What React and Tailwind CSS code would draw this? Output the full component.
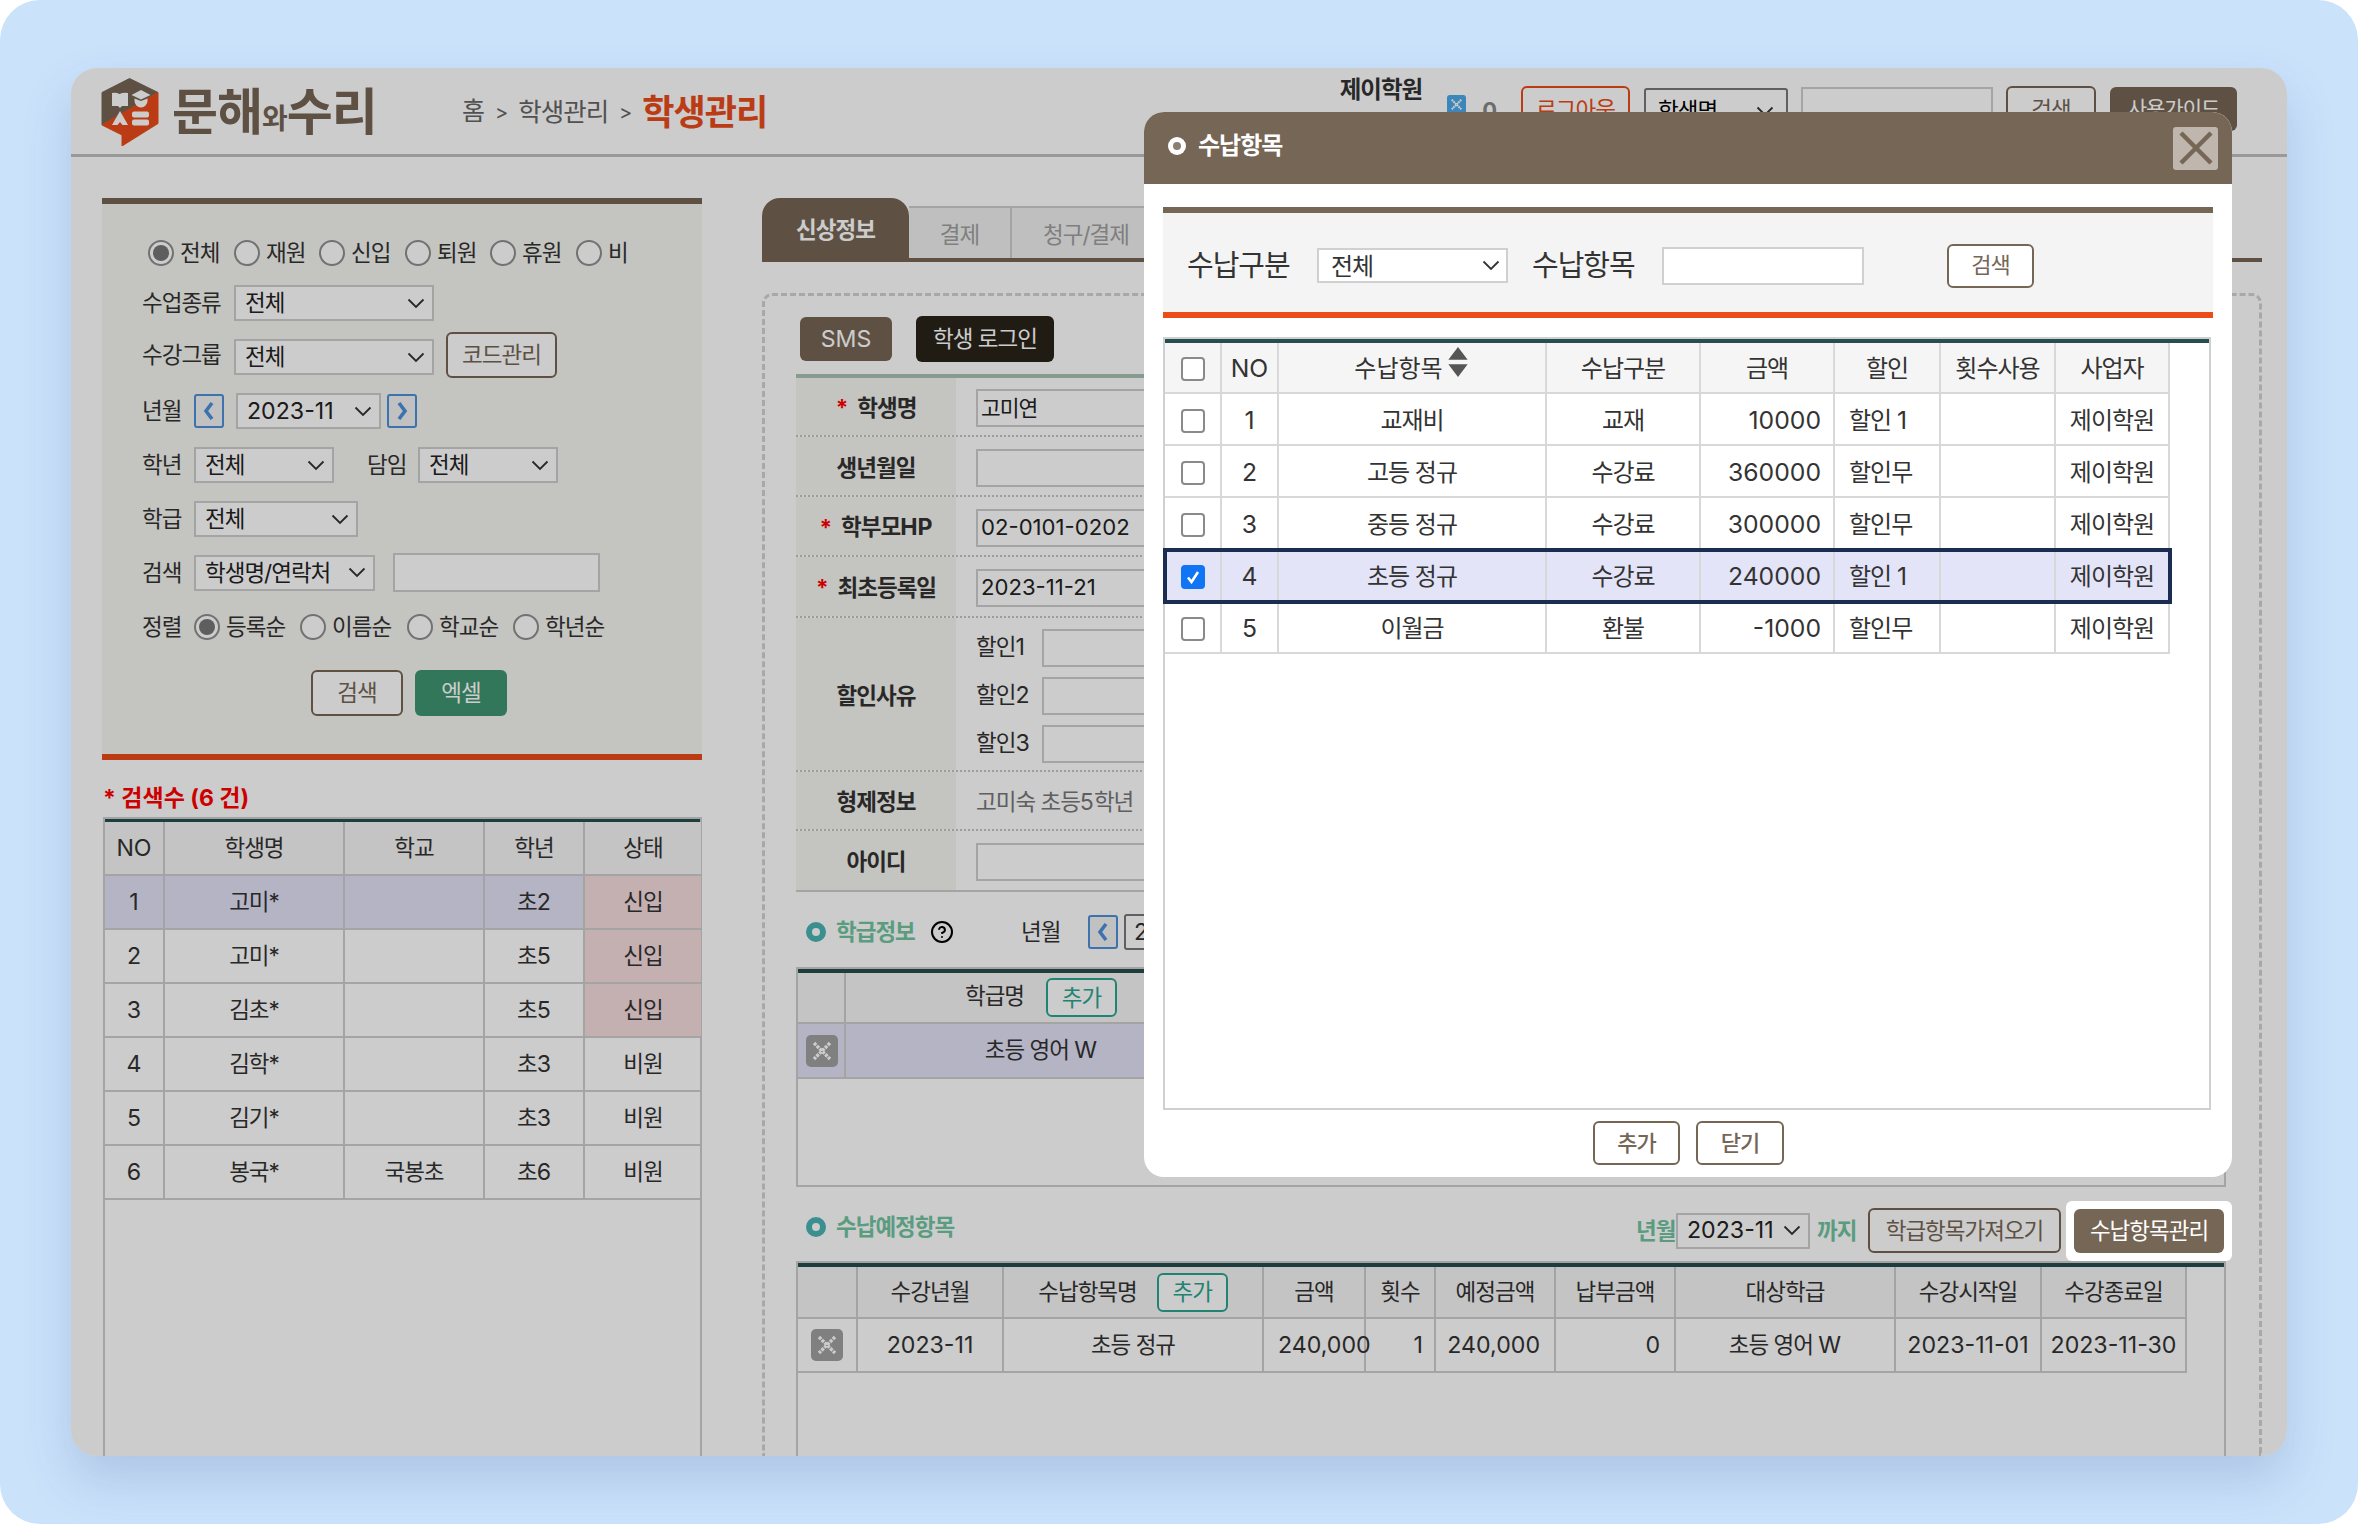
import React from "react";
import { CircleHelp } from "lucide-react";

const BR = "border-[#cecece]";
const Tx = ({ children }) => {
  const parts = String(children).split(/([0-9A-Za-z,\-]+)/);
  return (
    <>
      {parts.map((p, i) =>
        /^[0-9A-Za-z,\-]+$/.test(p) ? (
          <span key={i} className="text-[1.03em] tracking-normal">{p}</span>
        ) : (
          <span key={i}>{p}</span>
        )
      )}
    </>
  );
};

const Chev = ({ className = "" }) => (
  <svg width="18" height="11" viewBox="0 0 18 11" className={className}>
    <polyline points="1.5,1.5 9,9 16.5,1.5" fill="none" stroke="#333" strokeWidth="1.8" />
  </svg>
);

const Sel = ({ w, t, className = "" }) => (
  <div className={`flex h-[36px] shrink-0 items-center justify-between border-2 ${BR} bg-white pl-[9px] pr-[7px] text-[#222] ${className}`} style={{ width: w }}>
    <span className="whitespace-nowrap"><Tx>{t}</Tx></span>
    <Chev />
  </div>
);

const Label = ({ w, children, className = "" }) => (
  <span className={`block shrink-0 whitespace-nowrap ${className}`} style={{ width: w }}><Tx>{children}</Tx></span>
);

const Radio = ({ on }) => (
  <span className="flex h-[26px] w-[26px] shrink-0 items-center justify-center rounded-full border-2 border-[#8f8f8f] bg-white">
    {on && <span className="h-[16px] w-[16px] rounded-full bg-[#767676]" />}
  </span>
);

const RadioItem = ({ w, on, t }) => (
  <span className="flex shrink-0 items-center gap-[6px]" style={{ width: w }}>
    <Radio on={on} />
    <span className="whitespace-nowrap">{t}</span>
  </span>
);

const NavBtn = ({ dir }) => (
  <span className="flex h-[34px] w-[30px] shrink-0 items-center justify-center rounded-[3px] border-2 border-[#4c8fd9] bg-[#f2f2f2]">
    <svg width="14" height="20" viewBox="0 0 14 20">
      <polyline points={dir === "l" ? "10,2 4,10 10,18" : "4,2 10,10 4,18"} fill="none" stroke="#4c8fd9" strokeWidth="3.6" />
    </svg>
  </span>
);

const Btn = ({ w, h = 46, t, className = "" }) => (
  <span className={`flex shrink-0 items-center justify-center whitespace-nowrap rounded-[6px] border-2 border-[#766656] bg-white text-[#766656] ${className}`} style={{ width: w, height: h }}>
    {t}
  </span>
);

const AddBtn = () => (
  <span className="inline-flex h-[39px] w-[71px] items-center justify-center rounded-[6px] border-2 border-[#2aa58f] bg-white text-[#2aa58f]">추가</span>
);

const XIcon = ({ color = "#a0a0a0", size = 32 }) => (
  <svg width={size} height={size} viewBox="0 0 32 32" className="block">
    <rect width="32" height="32" rx="5" fill={color} />
    <path d="M8 8 L24 24 M24 8 L8 24" stroke="#fff" strokeWidth="3.4" strokeDasharray="3 1" />
  </svg>
);

const Dot = () => <span className="h-[20px] w-[20px] shrink-0 rounded-full border-[6px] border-[#4cb3b3] bg-white" />;

const SecTitle = ({ children }) => (
  <span className="ml-[10px] flex items-center gap-[10px] font-bold text-[#71c4a0]">
    <Dot />
    <span className="whitespace-nowrap">{children}</span>
  </span>
);

const Check = ({ on }) =>
  on ? (
    <span className="flex h-[24px] w-[24px] items-center justify-center rounded-[4px] bg-[#0f75f5]">
      <svg width="16" height="16" viewBox="0 0 16 16">
        <path d="M3 8.5 L6.5 13 L13 3" fill="none" stroke="#fff" strokeWidth="2.6" />
      </svg>
    </span>
  ) : (
    <span className="block h-[24px] w-[24px] rounded-[4px] border-2 border-[#8a8a8a] bg-white" />
  );

const Logo = () => (
  <svg width="58" height="68" viewBox="0 0 58 68" className="shrink-0">
    <polygon points="28.5,0.5 57,14.5 1,47 1,14.5" fill="#766656" stroke="#766656" strokeLinejoin="round" />
    <polygon points="1,47 57,14.5 57,45.5 21,68 21,57" fill="#ea4c1a" stroke="#ea4c1a" strokeLinejoin="round" />
    <path d="M11 15 Q15 14 18.5 16 Q23 14 27 15 V28 H21 L19 30 L17 28 H11 Z" fill="#fff" />
    <polygon points="30.5,17 40,12 49.5,17 40,21.5" fill="#fff" />
    <path d="M33.5 20.5 L40 23 L46.5 20.5 V23 A6.5 6.5 0 0 1 33.5 23 Z" fill="#fff" />
    <polygon points="19,33 27,47 21.5,47 19,44 16.5,47 11,47" fill="#fff" />
    <rect x="31" y="33.5" width="17" height="6" rx="2" fill="#fff" />
    <rect x="31" y="41.5" width="17" height="6" rx="2" fill="#fff" />
  </svg>
);

const Header = () => (
  <div className="flex h-[89px] shrink-0 items-start border-b-[3px] border-[#c0c0c0] pl-[30px] pt-[10px]">
    <Logo />
    <div className="ml-[13px] flex h-[68px] w-[204px] items-center whitespace-nowrap font-bold leading-none tracking-[-1px] text-[#766656]">
      <span className="text-[50px]">문해</span>
      <span className="mt-[14px] text-[28px]">와</span>
      <span className="text-[50px]">수리</span>
    </div>
    <div className="ml-[86px] flex h-[68px] items-center whitespace-nowrap text-[#666]">
      <span className="text-[25px]">홈</span>
      <span className="mx-[11px] text-[20px]">&gt;</span>
      <span className="text-[25.5px]">학생관리</span>
      <span className="mx-[11px] text-[20px]">&gt;</span>
      <span className="text-[35px] font-bold tracking-[-1px] text-[#ea4c1a]">학생관리</span>
    </div>
    <div className="ml-auto mr-[50px] mt-[8px] flex items-start">
      <span className="mt-[-14px] text-[23.5px] font-bold text-[#333]">제이학원</span>
      <span className="ml-[25px] mt-[9px]"><XIcon color="#4da8e8" size={19} /></span>
      <span className="ml-[16px] mt-[8px] text-[22px] font-bold text-[#888]">0</span>
      <Btn w={109} h={48} t="로그아웃" className="ml-[25px] border-[#ea4c1a] text-[#ea4c1a]" />
      <div className="ml-[14px] mt-[2px] flex h-[46px] w-[144px] items-center justify-between rounded-[3px] border-2 border-[#777] bg-white px-[12px]"><span>학생명</span><Chev /></div>
      <div className="ml-[13px] mt-[1px] h-[42px] w-[192px] border-2 border-[#cecece] bg-white" />
      <Btn w={90} h={48} t="검색" className="ml-[13px]" />
      <span className="ml-[14px] mt-[1px] flex h-[44px] w-[127px] items-center justify-center rounded-[6px] bg-[#766656] text-[21px] text-white">사용가이드</span>
    </div>
  </div>
);

const Sidebar = () => (
  <div className="ml-[31px] flex w-[600px] shrink-0 flex-col">
    <div className="flex h-[562px] shrink-0 flex-col border-y-[6px] border-b-[#ea4c1a] border-t-[#766656] bg-[#f6f5f0] pl-[40px] pt-[36px] text-[#333]">
      <div className="ml-[6px] flex h-[26px] items-center">
        <RadioItem w={86} on t="전체" />
        <RadioItem w={85} t="재원" />
        <RadioItem w={86} t="신입" />
        <RadioItem w={85} t="퇴원" />
        <RadioItem w={86} t="휴원" />
        <RadioItem w={50} t="비" />
      </div>
      <div className="mt-[19px] flex items-center">
        <Label w={92}>수업종류</Label>
        <Sel w={200} t="전체" />
      </div>
      <div className="mt-[11px] flex h-[46px] items-center">
        <Label w={92}>수강그룹</Label>
        <Sel w={200} t="전체" className="mt-[4px]" />
        <Btn w={111} t="코드관리" className="ml-[12px]" />
      </div>
      <div className="mt-[15px] flex h-[36px] items-center">
        <Label w={52}>년월</Label>
        <NavBtn dir="l" />
        <Sel w={145} t="2023-11" className="ml-[12px]" />
        <span className="ml-[6px]"><NavBtn dir="r" /></span>
      </div>
      <div className="mt-[18px] flex items-center">
        <Label w={52}>학년</Label>
        <Sel w={140} t="전체" />
        <Label w={51} className="ml-[33px]">담임</Label>
        <Sel w={140} t="전체" />
      </div>
      <div className="mt-[18px] flex items-center">
        <Label w={52}>학급</Label>
        <Sel w={164} t="전체" />
      </div>
      <div className="mt-[16px] flex h-[39px] items-center">
        <Label w={52}>검색</Label>
        <Sel w={181} t="학생명/연락처" />
        <div className={`ml-[18px] h-[39px] w-[207px] border-2 ${BR} bg-white`} />
      </div>
      <div className="mt-[22px] flex h-[26px] items-center">
        <Label w={52}>정렬</Label>
        <RadioItem w={106} on t="등록순" />
        <RadioItem w={107} t="이름순" />
        <RadioItem w={106} t="학교순" />
        <RadioItem w={100} t="학년순" />
      </div>
      <div className="ml-[169px] mt-[30px] flex gap-[12px]">
        <Btn w={92} t="검색" />
        <span className="flex h-[46px] w-[92px] items-center justify-center rounded-[6px] bg-[#3f9570] text-white">엑셀</span>
      </div>
    </div>
    <div className="ml-[1px] mt-[25px] whitespace-nowrap text-[23px] font-bold leading-[26px] tracking-normal text-[#ff0000]">* 검색수 (6 건)</div>
    <div className={`ml-[1px] mt-[6px] min-h-0 flex-1 border-x-2 border-t-2 ${BR}`}>
      <div className="h-[3px] bg-[#264e4e]" />
      <table className="w-full table-fixed border-separate border-spacing-0 text-center text-[#333]">
        <colgroup>
          {[60, 180, 140, 100, 116].map((w, i) => <col key={i} style={{ width: w }} />)}
        </colgroup>
        <thead>
          <tr className="h-[54px] bg-[#f5f5f5]">
            {["NO", "학생명", "학교", "학년", "상태"].map((h, i) => (
              <th key={i} className={`border-b-2 ${BR} p-0 font-normal ${i < 4 ? `border-r-2` : ""}`}><Tx>{h}</Tx></th>
            ))}
          </tr>
        </thead>
        <tbody>
          {[
            ["1", "고미*", "", "초2", "신입"],
            ["2", "고미*", "", "초5", "신입"],
            ["3", "김초*", "", "초5", "신입"],
            ["4", "김학*", "", "초3", "비원"],
            ["5", "김기*", "", "초3", "비원"],
            ["6", "봉국*", "국봉초", "초6", "비원"],
          ].map((r, ri) => (
            <tr key={ri} className={`h-[54px] ${ri === 0 ? "bg-[#e2e1f7]" : ""}`}>
              {r.map((c, i) => (
                <td key={i} className={`border-b-2 ${BR} p-0 ${i < 4 ? "border-r-2" : ""} ${i === 4 && ri < 3 ? "bg-[#f5dbde]" : ""}`}><Tx>{c}</Tx></td>
              ))}
            </tr>
          ))}
        </tbody>
      </table>
    </div>
  </div>
);

const FormRow = ({ h, label, star, children, last }) => (
  <div className={`flex ${last ? "border-b-2 border-solid border-[#cecece]" : "border-b-2 border-dotted border-[#c4c4c4]"}`} style={{ height: h }}>
    <div className="flex w-[160px] shrink-0 items-center justify-center gap-[10px] bg-[#f6f5f0] pt-[3px] font-bold text-[#333]">
      {star && <span className="text-[#ff0000]">*</span>}
      <span className="whitespace-nowrap"><Tx>{label}</Tx></span>
    </div>
    <div className="flex min-w-0 flex-1 items-center pl-[20px] pt-[3px]">{children}</div>
  </div>
);

const Inp = ({ v, w = 400, className = "" }) => (
  <div className={`flex h-[38px] shrink-0 items-center border-2 ${BR} bg-white pl-[3px] text-[21.5px] text-[#222] ${className}`} style={{ width: w }}><Tx>{v}</Tx></div>
);

const Main = () => (
  <div className="ml-[60px] flex w-[1500px] shrink-0 flex-col">
    <div className="flex h-[64px] shrink-0 items-end border-b-4 border-[#766656] text-[#9f9f9f]">
      <span className="flex h-[60px] w-[147px] items-center justify-center self-start rounded-t-[18px] bg-[#766656] pt-[4px] font-bold text-white">신상정보</span>
      <span className={`flex h-[52px] w-[103px] items-center justify-center border-r-2 border-t-2 ${BR} bg-[#efefef] pt-[3px]`}>결제</span>
      <span className={`flex h-[52px] w-[150px] items-center justify-center border-r-2 border-t-2 ${BR} bg-[#efefef] pt-[3px]`}>청구/결제</span>
    </div>
    <div className="mt-[31px] flex min-h-0 flex-1 flex-col rounded-t-[10px] border-x-[3px] border-t-[3px] border-dashed border-[#d2d2d2] pl-[31px] pr-[33px] pt-[20px] text-[#333]">
      <div className="ml-[4px] flex h-[46px] shrink-0 items-center">
        <span className="flex h-[44px] w-[92px] items-center justify-center rounded-[6px] bg-[#766656] text-white"><Tx>SMS</Tx></span>
        <span className="ml-[24px] flex h-[46px] w-[138px] items-center justify-center rounded-[6px] bg-[#282319] text-white">학생 로그인</span>
      </div>
      <div className="mt-[12px] h-[4px] shrink-0 bg-[#a8c3b5]" />
      <FormRow h={59} label="학생명" star><Inp v="고미연" /></FormRow>
      <FormRow h={60} label="생년월일"><Inp v="" /></FormRow>
      <FormRow h={60} label="학부모HP" star><Inp v="02-0101-0202" /></FormRow>
      <FormRow h={61} label="최초등록일" star><Inp v="2023-11-21" /></FormRow>
      <FormRow h={154} label="할인사유">
        <div className="flex flex-col gap-[10px]">
          {["할인1", "할인2", "할인3"].map((t) => (
            <div key={t} className="flex items-center">
              <span className="w-[66px] whitespace-nowrap"><Tx>{t}</Tx></span>
              <Inp v="" />
            </div>
          ))}
        </div>
      </FormRow>
      <FormRow h={59} label="형제정보"><span className="whitespace-nowrap text-[#777]"><Tx>고미숙 초등5학년</Tx></span></FormRow>
      <FormRow h={61} label="아이디" last><Inp v="" /></FormRow>

      <div className="mt-[23px] flex h-[34px] shrink-0 items-center">
        <div className="flex w-[134px] items-center"><SecTitle>학급정보</SecTitle></div>
        <CircleHelp size={24} strokeWidth={2} className="text-black" />
        <Label w={67} className="ml-[67px]">년월</Label>
        <NavBtn dir="l" />
        <div className="ml-[6px] flex h-[36px] w-[150px] items-center rounded-[3px] border-2 border-[#777] bg-white pl-[8px]"><Tx>2023-11</Tx></div>
      </div>
      <div className={`mt-[18px] h-[220px] shrink-0 border-2 ${BR}`}>
        <div className="h-[4px] bg-[#264e4e]" />
        <table className="table-fixed border-separate border-spacing-0 text-center">
          <colgroup><col style={{ width: 48 }} /><col style={{ width: 390 }} /><col style={{ width: 988 }} /></colgroup>
          <tbody>
            <tr className="h-[51px] bg-[#f5f5f5]">
              <td className={`border-b-2 border-r-2 ${BR} p-0`} />
              <td className={`border-b-2 ${BR} p-0`}>
                <span className="inline-flex items-center gap-[22px]"><span className="-mt-[4px]">학급명</span><AddBtn /></span>
              </td>
              <td className={`border-b-2 ${BR} p-0`} />
            </tr>
            <tr className="h-[55px] bg-[#e2e1f7]">
              <td className={`border-b-2 border-r-2 ${BR} p-0`}><span className="ml-[8px] block"><XIcon /></span></td>
              <td className={`border-b-2 ${BR} p-0`}><Tx>초등 영어 W</Tx></td>
              <td className={`border-b-2 ${BR} p-0`} />
            </tr>
          </tbody>
        </table>
      </div>

      <div className="mt-[14px] flex h-[59px] shrink-0 items-center">
        <span className="-mt-[8px]"><SecTitle>수납예정항목</SecTitle></span>
        <div className="-mr-[6px] ml-auto flex items-center">
          <span className="w-[40px] whitespace-nowrap font-bold text-[#71c4a0]">년월</span>
          <Sel w={134} t="2023-11" />
          <span className="ml-[7px] w-[44px] whitespace-nowrap font-bold text-[#71c4a0]">까지</span>
          <Btn w={193} h={45} t="학급항목가져오기" className="ml-[7px]" />
          <div className="relative z-20 ml-[5px] rounded-[6px] bg-white p-[8px]">
            <span className="flex h-[44px] w-[150px] items-center justify-center rounded-[6px] bg-[#766656] text-white">수납항목관리</span>
          </div>
        </div>
      </div>
      <div className={`mt-[1px] min-h-0 flex-1 border-x-2 border-t-2 ${BR}`}>
        <div className="h-[4px] bg-[#264e4e]" />
        <table className="w-[1389px] table-fixed border-separate border-spacing-0 text-center">
          <colgroup>
            {[60, 146, 260, 102, 70, 120, 120, 220, 146, 145].map((w, i) => <col key={i} style={{ width: w }} />)}
          </colgroup>
          <tbody>
            <tr className="h-[52px] bg-[#f5f5f5]">
              {["", "수강년월", "수납항목명", "금액", "횟수", "예정금액", "납부금액", "대상학급", "수강시작일", "수강종료일"].map((h, i) => (
                <td key={i} className={`border-b-2 border-r-2 ${BR} p-0`}>
                  {i === 2 ? (
                    <span className="inline-flex items-center gap-[20px]"><span>{h}</span><AddBtn /></span>
                  ) : h}
                </td>
              ))}
            </tr>
            <tr className="h-[54px]">
              <td className={`border-b-2 border-r-2 ${BR} p-0`}><span className="ml-[13px] block"><XIcon /></span></td>
              <td className={`border-b-2 border-r-2 ${BR} p-0`}><Tx>2023-11</Tx></td>
              <td className={`border-b-2 border-r-2 ${BR} p-0`}><Tx>초등 정규</Tx></td>
              <td className={`border-b-2 border-r-2 ${BR} p-0 pl-[14px] text-left whitespace-nowrap`}><Tx>240,000</Tx></td>
              <td className={`border-b-2 border-r-2 ${BR} p-0 pr-[11px] text-right`}><Tx>1</Tx></td>
              <td className={`border-b-2 border-r-2 ${BR} p-0 pr-[14px] text-right`}><Tx>240,000</Tx></td>
              <td className={`border-b-2 border-r-2 ${BR} p-0 pr-[14px] text-right`}><Tx>0</Tx></td>
              <td className={`border-b-2 border-r-2 ${BR} p-0`}><Tx>초등 영어 W</Tx></td>
              <td className={`border-b-2 border-r-2 ${BR} p-0`}><Tx>2023-11-01</Tx></td>
              <td className={`border-b-2 border-r-2 ${BR} p-0`}><Tx>2023-11-30</Tx></td>
            </tr>
          </tbody>
        </table>
      </div>
    </div>
  </div>
);

const Modal = () => (
  <div className="absolute left-[1073px] top-[44px] z-20 flex h-[1065px] w-[1088px] flex-col overflow-hidden rounded-[20px] bg-white text-[24px] tracking-[-1px] text-[#333]">
    <div className="flex h-[72px] shrink-0 items-center bg-[#766656] pl-[24px] pr-[14px] text-white">
      <span className="-mt-[5px] flex h-[18px] w-[18px] items-center justify-center rounded-full bg-white"><span className="h-[8px] w-[8px] rounded-full bg-[#8a8072]" /></span>
      <span className="-mt-[5px] ml-[12px] text-[24px] font-bold">수납항목</span>
      <span className="ml-auto flex h-[43px] w-[45px] items-center justify-center rounded-[3px] bg-[#bfb6ad]">
        <svg width="36" height="36" viewBox="0 0 36 36"><path d="M3 3 L33 33 M33 3 L3 33" stroke="#766656" strokeWidth="4.5" /></svg>
      </span>
    </div>
    <div className="mx-[19px] mt-[23px] flex h-[111px] shrink-0 items-center border-y-[6px] border-b-[#ea4c1a] border-t-[#766656] bg-[#f4f4f4] pl-[24px] pt-[6px]">
      <span className="w-[106px] whitespace-nowrap text-[29px]">수납구분</span>
      <div className="ml-[24px] flex h-[35px] w-[191px] items-center justify-between border-2 border-[#d0d0d0] bg-white pl-[12px] pr-[6px] text-[24px]"><span className="pt-[3px]">전체</span><Chev /></div>
      <span className="ml-[24px] w-[106px] whitespace-nowrap text-[29px]">수납항목</span>
      <div className="ml-[24px] h-[38px] w-[202px] border-2 border-[#d0d0d0] bg-white" />
      <Btn w={87} h={44} t="검색" className="ml-[83px] text-[22px]" />
    </div>
    <div className="mx-[19px] mt-[19px] h-[773px] w-[1048px] shrink-0 border-2 border-[#d0d0d0]">
      <div className="h-[4px] bg-[#264e4e]" />
      <table className="w-[1005px] table-fixed border-separate border-spacing-0 text-center">
        <colgroup>
          {[57, 57, 268, 154, 134, 106, 115, 114].map((w, i) => <col key={i} style={{ width: w }} />)}
        </colgroup>
        <thead>
          <tr className="h-[51px] bg-[#f5f5f5]">
            {["", "NO", "수납항목", "수납구분", "금액", "할인", "횟수사용", "사업자"].map((h, i) => (
              <th key={i} className="border-b-2 border-r-2 border-[#d8d8d8] p-0 pt-[2px] font-normal">
                {i === 0 ? <span className="flex justify-center"><Check /></span> : i === 2 ? (
                  <span className="inline-flex items-start gap-[3px]">
                    <span className="tracking-[0px]">{h}</span>
                    <svg width="24" height="30" viewBox="0 0 22 28" className="mt-[-4px]">
                      <polygon points="11,0 20,12 2,12" fill="#555" />
                      <polygon points="11,28 20,16 2,16" fill="#555" />
                    </svg>
                  </span>
                ) : <Tx>{h}</Tx>}
              </th>
            ))}
          </tr>
        </thead>
        <tbody>
          {[
            ["1", "교재비", "교재", "10000", "할인 1"],
            ["2", "고등 정규", "수강료", "360000", "할인무"],
            ["3", "중등 정규", "수강료", "300000", "할인무"],
            ["4", "초등 정규", "수강료", "240000", "할인 1"],
            ["5", "이월금", "환불", "-1000", "할인무"],
          ].map((r, ri) => {
            const sel = ri === 3;
            const c = "border-b-2 border-r-2 border-[#d8d8d8] p-0 pt-[4px]";
            return (
              <tr key={ri} className={`h-[52px] ${sel ? "bg-[#e4e4f8] outline-4 -outline-offset-2 outline-[#1a2c50]" : ""}`}>
                <td className={c}><span className="flex justify-center"><Check on={sel} /></span></td>
                <td className={c}><Tx>{r[0]}</Tx></td>
                <td className={c}><Tx>{r[1]}</Tx></td>
                <td className={c}><Tx>{r[2]}</Tx></td>
                <td className={`${c} pr-[12px] text-right`}><Tx>{r[3]}</Tx></td>
                <td className={`${c} pl-[14px] text-left`}><Tx>{r[4]}</Tx></td>
                <td className={c} />
                <td className={c}><Tx>제이학원</Tx></td>
              </tr>
            );
          })}
        </tbody>
      </table>
    </div>
    <div className="ml-[449px] mt-[11px] flex gap-[16px]">
      <Btn w={87} h={44} t="추가" className="text-[22px] font-medium" />
      <Btn w={88} h={44} t="닫기" className="text-[22px] font-medium" />
    </div>
  </div>
);

export default function App() {
  return (
    <div className="h-[1524px] w-[2358px] overflow-hidden bg-white font-['Inter','Noto_Sans_CJK_KR',sans-serif] text-[22.5px] leading-normal tracking-[-1px]">
      <div className="h-full rounded-[40px] bg-[#cbe2fb] pl-[71px] pt-[68px]">
        <div className="relative flex h-[1388px] w-[2216px] flex-col overflow-hidden rounded-[26px] bg-white shadow-[0_24px_50px_rgba(40,70,130,0.18)]">
          <Header />
          <div className="flex min-h-0 flex-1 pt-[41px]">
            <Sidebar />
            <Main />
          </div>
          <div className="absolute inset-0 z-10 bg-black/20" />
          <Modal />
        </div>
      </div>
    </div>
  );
}
